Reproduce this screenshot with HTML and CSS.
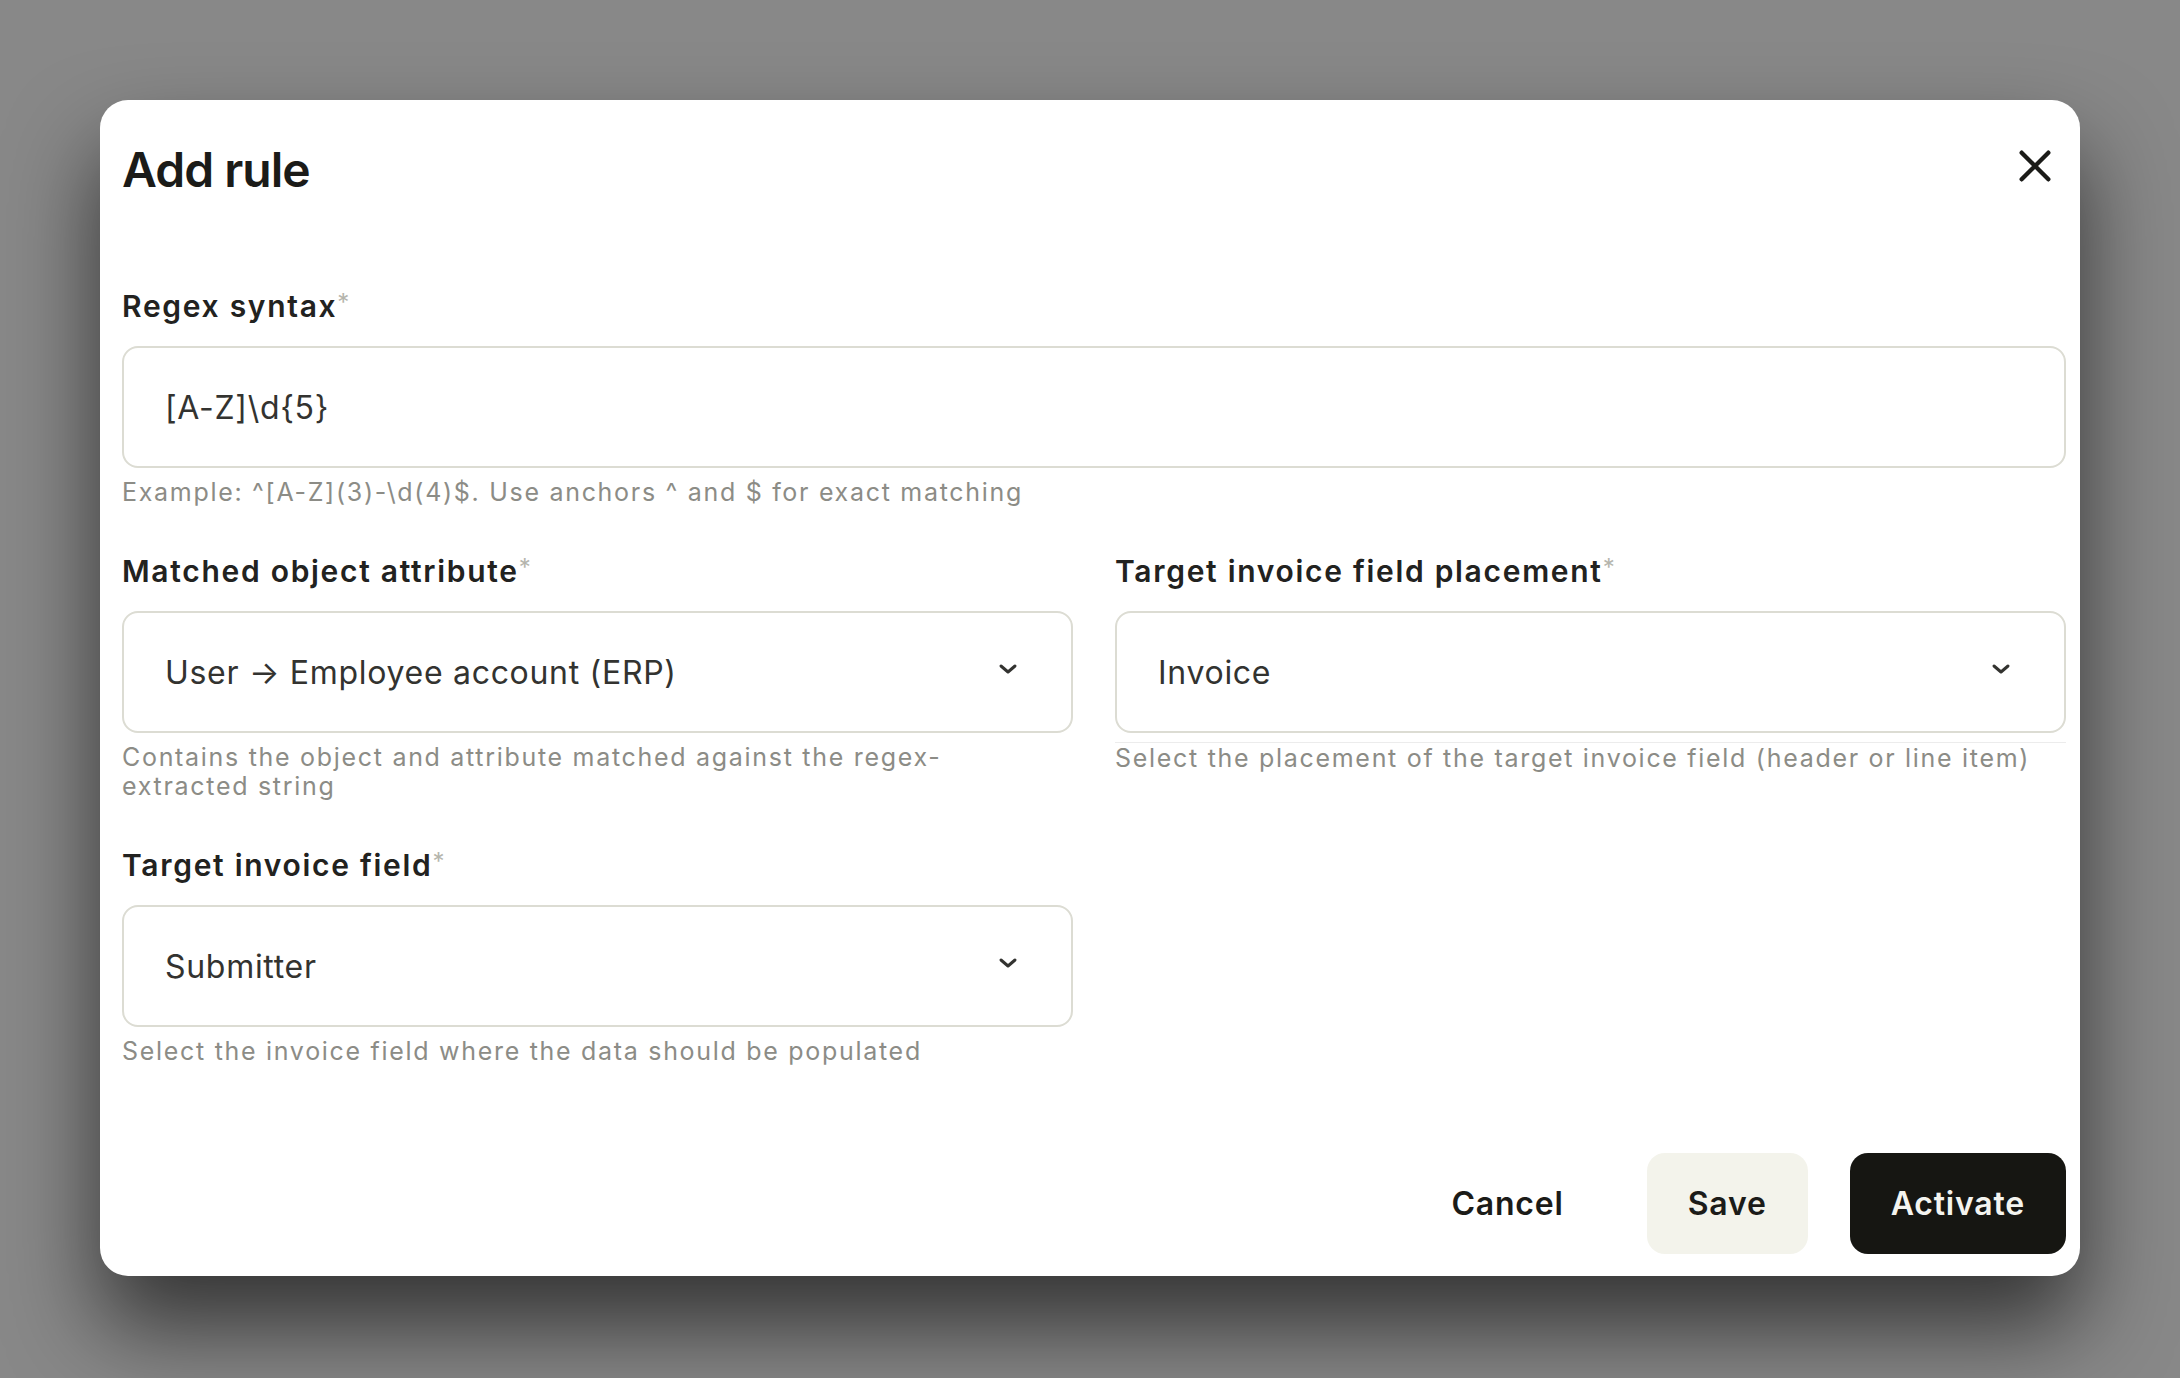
FILE: index.html
```html
<!DOCTYPE html>
<html lang="en">
<head>
  <meta charset="UTF-8">
  <meta name="viewport" content="width=device-width, initial-scale=1.0">
  <title>Add rule</title>

  <link rel="stylesheet" href="styles.css">
</head>
<body>
  <main class="modal">
    <header class="modal-header">
      <h1>Add rule</h1>

      <button class="close-button" aria-label="Close">
        <svg viewBox="0 0 24 24" width="40" height="40">
          <path d="M4 4 L20 20 M20 4 L4 20" />
        </svg>
      </button>
    </header>

    <section class="field">
      <label>Regex syntax<span class="required">*</span></label>
      <div class="control">[A-Z]\d{5}</div>
      <p class="hint">Example: ^[A-Z](3)-\d(4)$. Use anchors ^ and $ for exact matching</p>
    </section>

    <div class="field-row">
      <section class="field">
        <label>Matched object attribute<span class="required">*</span></label>
        <div class="control select">
          User &rarr; Employee account (ERP)
          <svg class="chevron" viewBox="0 0 20 12"><path d="M3 3 L10 9 L17 3" /></svg>
        </div>
        <p class="hint">Contains the object and attribute matched against the regex-extracted string</p>
      </section>

      <section class="field">
        <label>Target invoice field placement<span class="required">*</span></label>
        <div class="control select">
          Invoice
          <svg class="chevron" viewBox="0 0 20 12"><path d="M3 3 L10 9 L17 3" /></svg>
        </div>
        <p class="hint underlined">Select the placement of the target invoice field (header or line item)</p>
      </section>
    </div>

    <div class="field-row">
      <section class="field">
        <label>Target invoice field<span class="required">*</span></label>
        <div class="control select">
          Submitter
          <svg class="chevron" viewBox="0 0 20 12"><path d="M3 3 L10 9 L17 3" /></svg>
        </div>
        <p class="hint">Select the invoice field where the data should be populated</p>
      </section>
    </div>

    <footer class="modal-footer">
      <button class="btn btn-text">Cancel</button>
      <button class="btn btn-soft">Save</button>
      <button class="btn btn-dark">Activate</button>
    </footer>
  </main>
</body>
</html>
```

FILE: styles.css
```css
* {
  margin: 0;
  padding: 0;
  box-sizing: border-box;
}

html, body {
  min-height: 100vh;
}

body, button {
  font-family: 'Inter', 'Liberation Sans', sans-serif;
  color: #1b1b18;
}

body {
  background: #888888;
  padding: 100px;
}

.modal {
  width: 1980px;
  padding: 42px 14px 22px 22px;
  background: #ffffff;
  border-radius: 28px;
  box-shadow: 0px 50px 90px rgba(0, 0, 0, 0.62);
}

.modal-header {
  display: flex;
  align-items: flex-start;
  justify-content: space-between;
  margin-bottom: 90px;
}

.modal-header h1 {
  font-size: 48px;
  line-height: 56px;
  font-weight: 600;
  letter-spacing: -1px;
}

.close-button {
  width: 48px;
  height: 48px;
  margin-right: 7px;
  border: none;
  background: none;
  display: flex;
  align-items: center;
  justify-content: center;
  cursor: pointer;
}

.close-button svg path {
  stroke: #1b1b18;
  stroke-width: 2.6;
  stroke-linecap: round;
  fill: none;
}

.field-row {
  display: grid;
  grid-template-columns: 1fr 1fr;
  gap: 42px;
}

.field {
  margin-bottom: 46px;
}

.field label {
  display: block;
  margin-bottom: 22px;
  font-size: 30px;
  line-height: 36px;
  font-weight: 600;
  letter-spacing: 1.7px;
  color: #222220;
}

.field .required {
  color: #b5b5ad;
  font-weight: 400;
  font-size: 24px;
  letter-spacing: 0;
  vertical-align: top;
  line-height: 30px;
}

.control {
  height: 122px;
  padding: 0 53px 0 41px;
  border: 2px solid #dcdcd3;
  border-radius: 16px;

  display: flex;
  align-items: center;
  justify-content: space-between;

  font-size: 32px;
  letter-spacing: 0.7px;
  color: #333330;
}

.chevron {
  width: 20px;
  height: 12px;
  margin-top: -6px;
}

.chevron path {
  stroke: #333330;
  stroke-width: 3;
  stroke-linecap: round;
  stroke-linejoin: round;
  fill: none;
}

.hint {
  margin-top: 10px;
  padding-right: 24px;
  font-size: 25px;
  line-height: 29px;
  letter-spacing: 1.7px;
  color: #8c8c86;
}

.hint.underlined {
  border-top: 1px solid #ececec;
  margin-top: 9px;
  padding-top: 1px;
}

.modal-footer {
  margin-top: 41px;
  display: flex;
  justify-content: flex-end;
  gap: 42px;
}

.btn {
  height: 101px;
  padding: 0 41px;
  border: none;
  border-radius: 18px;
  font-size: 32px;
  font-weight: 600;
  letter-spacing: 0.8px;
  cursor: pointer;
}

.btn-text {
  background: transparent;
  color: #1b1b18;
}

.btn-soft {
  background: #f3f3eb;
  color: #1b1b18;
}

.btn-dark {
  background: #161612;
  color: #f4f4ef;
}
```
